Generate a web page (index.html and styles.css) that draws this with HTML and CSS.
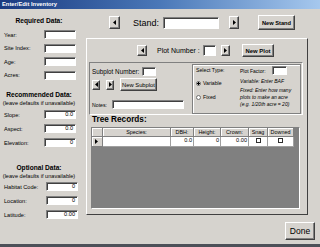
FILE: index.html
```html
<!DOCTYPE html>
<html>
<head>
<meta charset="utf-8">
<title>Enter/Edit Inventory</title>
<link rel="stylesheet" href="styles.css">
</head>
<body>
<div class="window">
  <div class="titlebar">Enter/Edit Inventory</div>
  <div class="main">
    <div class="left">
      <div class="group g1">
        <div class="gtitle">Required Data:</div>
        <div class="fields f1">
          <div class="field"><span class="lbl">Year:</span><span class="box"></span></div>
          <div class="field"><span class="lbl">Site Index:</span><span class="box"></span></div>
          <div class="field"><span class="lbl">Age:</span><span class="box"></span></div>
          <div class="field"><span class="lbl">Acres:</span><span class="box"></span></div>
        </div>
      </div>
      <div class="group g2">
        <div class="gtitle">Recommended Data:</div>
        <div class="gsub">(leave defaults if unavailable)</div>
        <div class="fields f2">
          <div class="field"><span class="lbl">Slope:</span><span class="box">0.0</span></div>
          <div class="field"><span class="lbl">Aspect:</span><span class="box">0.0</span></div>
          <div class="field"><span class="lbl">Elevation:</span><span class="box">0</span></div>
        </div>
      </div>
      <div class="group g3">
        <div class="gtitle">Optional Data:</div>
        <div class="gsub">(leave defaults if unavailable)</div>
        <div class="fields f3">
          <div class="field"><span class="lbl">Habitat Code:</span><span class="box">0</span></div>
          <div class="field"><span class="lbl">Location:</span><span class="box">0</span></div>
          <div class="field"><span class="lbl">Latitude:</span><span class="box">0.00</span></div>
        </div>
      </div>
    </div>
    <div class="right">
      <div class="stand-row">
        <span class="btn sp-prev"><svg width="3" height="5" viewBox="0 0 3 5"><polygon points="3,0 0,2.5 3,5" fill="#000"/></svg></span>
        <span class="stand-lbl">Stand:</span>
        <span class="box stand-box"></span>
        <span class="btn sp-next"><svg width="3" height="5" viewBox="0 0 3 5"><polygon points="0,0 3,2.5 0,5" fill="#000"/></svg></span>
        <span class="btn newstand">New Stand</span>
      </div>
      <div class="plot-panel">
        <div class="plot-row">
          <span class="btn pp-prev"><svg width="3" height="5" viewBox="0 0 3 5"><polygon points="3,0 0,2.5 3,5" fill="#000"/></svg></span>
          <span class="plot-lbl">Plot Number :</span>
          <span class="box plot-box"></span>
          <span class="btn pp-next"><svg width="3" height="5" viewBox="0 0 3 5"><polygon points="0,0 3,2.5 0,5" fill="#000"/></svg></span>
          <span class="btn newplot">New Plot</span>
        </div>
        <div class="sub-panel">
          <div class="sub-left">
            <div class="sub-num"><span class="sub-num-lbl">Subplot Number:</span><span class="box sub-box"></span></div>
            <div class="sub-nav">
              <span class="btn sn-prev"><svg width="3" height="5" viewBox="0 0 3 5"><polygon points="3,0 0,2.5 3,5" fill="#000"/></svg></span>
              <span class="btn sn-next"><svg width="3" height="5" viewBox="0 0 3 5"><polygon points="0,0 3,2.5 0,5" fill="#000"/></svg></span>
              <span class="btn newsub">New Subplot</span>
            </div>
            <div class="notes"><span class="notes-lbl">Notes:</span><span class="box notes-box"></span></div>
          </div>
          <div class="typebox">
            <div class="type-col">
              <div class="type-title">Select Type:</div>
              <div class="radio-row r1"><span class="radio checked"></span>Variable</div>
              <div class="radio-row r2"><span class="radio"></span>Fixed</div>
            </div>
            <div class="pf-col">
              <div class="pf-row"><span class="pf-lbl">Plot Factor:</span><span class="box pf-box"></span></div>
              <div class="hint h1">Variable: Enter BAF</div>
              <div class="hint h2">Fixed: Enter how many<br>plots to make an acre<br>(e.g. 1/20th acre = 20)</div>
            </div>
          </div>
        </div>
        <div class="tree-title">Tree Records:</div>
        <div class="grid">
          <div class="grow head">
            <span class="c rh"></span>
            <span class="c">Species:</span>
            <span class="c">DBH:</span>
            <span class="c">Height:</span>
            <span class="c">Crown:</span>
            <span class="c">Snag</span>
            <span class="c">Downed</span>
          </div>
          <div class="grow data">
            <span class="c rh"><svg width="3" height="5" viewBox="0 0 3 5"><polygon points="0,0 3,2.5 0,5" fill="#000"/></svg></span>
            <span class="c"></span>
            <span class="c">0.0</span>
            <span class="c">0</span>
            <span class="c">0.00</span>
            <span class="c chk"><span class="cb"></span></span>
            <span class="c chk"><span class="cb"></span></span>
          </div>
        </div>
      </div>
      <div class="done-row"><span class="btn done">Done</span></div>
    </div>
  </div>
</div>
</body>
</html>
```

FILE: styles.css
```css
* { box-sizing: border-box; margin: 0; padding: 0; }
html, body { width: 320px; height: 247px; overflow: hidden; }
body { font-family: "Liberation Sans", Arial, sans-serif; color: #000; background: #d6d3ce; }

.window { width: 320px; height: 247px; display: flex; flex-direction: column; background: #d6d3ce; border-bottom: 3px solid #4c5058; }
.titlebar { height: 9px; line-height: 9px; padding-left: 2px; font-size: 5.8px; font-weight: bold; color: #fff;
  background: linear-gradient(90deg, #1a3a80 0%, #4a78b8 50%, #a6c8ee 100%); }
.main { flex: 1; display: flex; }

/* left column */
.left { width: 86px; display: flex; flex-direction: column; }
.gtitle { width: 78px; font-weight: bold; font-size: 6.6px; line-height: 8px; text-align: center; }
.gsub { width: 78px; font-size: 5.6px; line-height: 8px; text-align: center; }
.g1 { margin-top: 8px; }
.g2 { margin-top: 11.5px; }
.g3 { margin-top: 17px; }
.fields { display: flex; flex-direction: column; }
.f1 { margin-top: 5px; gap: 4.5px; }
.f2 { margin-top: 3px; gap: 5px; }
.f3 { margin-top: 2px; gap: 5px; }
.field { display: flex; align-items: center; height: 9px; font-size: 5.6px; padding-left: 4px; }
.lbl { width: 40px; }
.f3 .lbl { width: 42px; }
.box { background: #fff; border: 1px solid; border-color: #808080 #fff #fff #808080; box-shadow: inset 1px 1px #404040; }
.field .box { width: 32px; height: 9px; font-size: 5.6px; line-height: 7px; text-align: right; padding-right: 2px; }

/* buttons */
.btn { background: #d6d3ce; border: 1px solid; border-color: #fff #404040 #404040 #fff; box-shadow: inset -1px -1px #808080;
  display: flex; align-items: center; justify-content: center; white-space: nowrap; }
.btn svg, .rh svg { display: block; }

/* right column */
.right { flex: 1; display: flex; flex-direction: column; }
.stand-row { margin-top: 6px; height: 15px; display: flex; align-items: center; }
.sp-prev { margin-left: 23px; width: 11px; height: 13px; }
.stand-lbl { margin-left: 13px; width: 30px; font-size: 9px; }
.stand-box { width: 56px; height: 12px; }
.sp-next { margin-left: 10px; width: 10px; height: 13px; }
.newstand { margin-left: 19px; width: 37px; height: 15px; font-size: 5.7px; font-weight: bold; }

.plot-panel { margin-top: 8px; width: 222px; height: 177px; border: 1px solid; border-color: #fff #404040 #404040 #fff;
  display: flex; flex-direction: column; }
.plot-row { margin-top: 5px; height: 13px; display: flex; align-items: center; }
.pp-prev { margin-left: 50px; width: 10px; height: 11px; }
.plot-lbl { margin-left: 10px; width: 46px; font-size: 7px; }
.plot-box { width: 13px; height: 11px; }
.pp-next { margin-left: 5px; width: 9px; height: 11px; }
.newplot { margin-left: 12px; width: 32px; height: 13px; font-size: 5.9px; font-weight: bold; }

.sub-panel { margin-top: 5px; margin-left: 2px; width: 214px; height: 53px; border: 1px solid; border-color: #808080 #fff #fff #808080; display: flex; }
.sub-left { width: 102px; padding-left: 2px; display: flex; flex-direction: column; }
.sub-num { margin-top: 3px; height: 10px; display: flex; align-items: center; font-size: 6.3px; }
.sub-num-lbl { width: 50px; }
.sub-box { width: 14px; height: 9px; }
.sub-nav { margin-top: 2px; height: 13px; display: flex; align-items: center; }
.sn-prev { width: 8px; height: 10px; }
.sn-next { margin-left: 6px; width: 8px; height: 10px; }
.newsub { margin-left: 6px; width: 37px; height: 13px; font-size: 5.8px; }
.notes { margin-top: 9px; height: 9px; display: flex; align-items: center; font-size: 5.2px; }
.notes-lbl { width: 20px; }
.notes-box { width: 72px; height: 9px; }

.typebox { margin-top: 1px; width: 109px; height: 50px; border: 1px solid #808080; box-shadow: inset 1px 1px #fff; display: flex; }
.type-col { width: 47px; padding-left: 3px; display: flex; flex-direction: column; font-size: 5.2px; }
.type-title { margin-top: 1px; line-height: 8px; }
.radio-row { display: flex; align-items: center; height: 8px; gap: 2px; }
.r1 { margin-top: 5px; }
.r2 { margin-top: 6px; }
.radio { width: 5px; height: 5px; border-radius: 50%; border: 1px solid #707070; background: #fff; }
.radio.checked { background: radial-gradient(circle, #000 0 1px, #fff 1.4px); }
.pf-col { display: flex; flex-direction: column; font-size: 5px; }
.pf-row { margin-top: 1px; height: 9px; display: flex; align-items: center; }
.pf-lbl { width: 32px; }
.pf-box { width: 15px; height: 9px; }
.hint { font-style: italic; line-height: 7px; white-space: nowrap; }
.h1 { margin-top: 2.5px; }
.h2 { margin-top: 2px; }

.tree-title { margin-left: 5px; height: 12px; line-height: 10px; font-size: 8.2px; font-weight: bold; }

.grid { margin-left: 4px; width: 209px; height: 82px; border: 1px solid; border-color: #808080 #fff #fff #808080; background: #808080;
  display: flex; flex-direction: column; }
.grow { display: grid; grid-template-columns: 11px 68px 23px 27px 28px 19px 26px; }
.head { height: 9px; }
.head .c { background: #d6d3ce; border-right: 1px solid #808080; border-bottom: 1px solid #808080; box-shadow: inset 1px 1px #fff;
  font-size: 5.4px; line-height: 8px; text-align: center; white-space: nowrap; overflow: hidden; }
.data { height: 10px; }
.data .c { background: #fff; border-right: 1px solid #a0a0a0; border-bottom: 1px solid #a0a0a0; font-size: 5.6px; line-height: 7px;
  text-align: right; padding-right: 1px; }
.data .rh { background: #d6d3ce; border-color: #808080; box-shadow: inset 1px 1px #fff; display: flex; align-items: center; justify-content: center; }
.data .chk { display: flex; justify-content: center; padding: 1px 0 0; }
.cb { width: 5px; height: 5px; border: 1px solid #303030; background: #fff; }

.done-row { margin-top: 7px; display: flex; justify-content: flex-end; padding-right: 5px; }
.done { width: 30px; height: 18px; font-size: 8.5px; }
```
